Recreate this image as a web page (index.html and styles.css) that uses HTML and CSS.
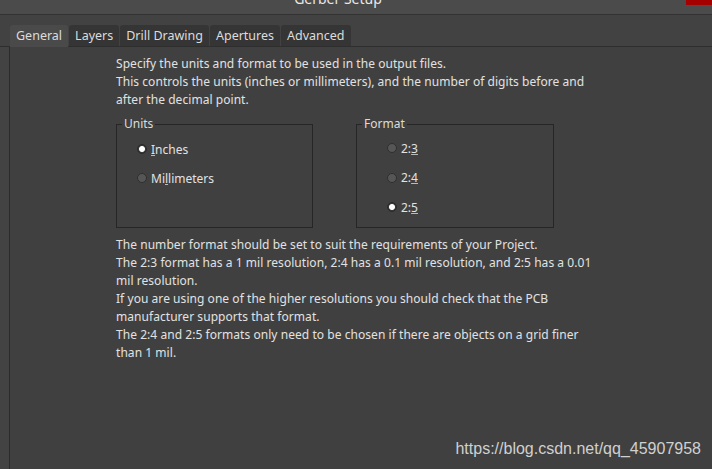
FILE: index.html
```html
<!DOCTYPE html>
<html lang="en">
<head>
  <meta charset="UTF-8" />
  <title>Gerber Setup</title>
  <link rel="stylesheet" href="styles.css">
</head>
<body>

  <div class="titlebar">
    <div class="title">Gerber Setup</div>
    <div class="close"></div>
  </div>

  <div class="tabbar">
    <div class="tab active">General</div>
    <div class="tab">Layers</div>
    <div class="tab">Drill Drawing</div>
    <div class="tab">Apertures</div>
    <div class="tab">Advanced</div>
  </div>

  <div class="main">
    <div class="gutter"></div>
    <div class="panel">
      <p class="text">Specify the units and format to be used in the output files.<br>
        This controls the units (inches or millimeters), and the number of digits before and<br>
        after the decimal point.</p>

      <div class="groups">
        <div class="group units">
          <span class="legend">Units</span>
          <label class="radio"><span class="dot on"></span><span><u>I</u>nches</span></label>
          <label class="radio"><span class="dot"></span><span>Mi<u>l</u>limeters</span></label>
        </div>
        <div class="group format">
          <span class="legend">Format</span>
          <label class="radio"><span class="dot"></span><span>2:<u>3</u></span></label>
          <label class="radio"><span class="dot"></span><span>2:<u>4</u></span></label>
          <label class="radio"><span class="dot on"></span><span>2:<u>5</u></span></label>
        </div>
      </div>

      <p class="text">The number format should be set to suit the requirements of your Project.<br>
        The 2:3 format has a 1 mil resolution, 2:4 has a 0.1 mil resolution, and 2:5 has a 0.01<br>
        mil resolution.<br>
        If you are using one of the higher resolutions you should check that the PCB<br>
        manufacturer supports that format.<br>
        The 2:4 and 2:5 formats only need to be chosen if there are objects on a grid finer<br>
        than 1 mil.</p>

      <div class="watermark">https://blog.csdn.net/qq_45907958</div>
    </div>
  </div>

</body>
</html>
```

FILE: styles.css
```css
html, body { margin: 0; padding: 0; height: 100%; overflow: hidden; }
body { background: #404040; color: #e2e2e2; font-family: "Noto Sans", "Open Sans", sans-serif; font-size: 12px; display: flex; flex-direction: column; }
.titlebar { height: 14px; background: #4b4b4b; position: relative; overflow: hidden; border-bottom: 1px solid #333; }
.title { text-align: center; font-size: 14px; line-height: 14px; margin-top: -8px; color: #e8e8e8; padding-right: 36px; }
.close { position: absolute; top: 0; right: 0; width: 26px; height: 5px; background: #a50000; }
.tabbar { background: #424242; display: flex; align-items: flex-end; padding-left: 10px; border-bottom: 1px solid #2e2e2e; box-sizing: border-box; height: 32px; }
.tab { height: 21px; line-height: 21px; padding: 0 6px; margin-right: 1px; background: #353535; border-radius: 3px 3px 0 0; color: #dcdcdc; font-size: 12.5px; }
.tab.active { background: #4a4a4a; height: 22px; margin-bottom: -1px; }
.main { flex: 1; display: flex; }
.gutter { width: 9px; background: #434343; }
.panel { flex: 1; border-left: 1px solid #2b2b2b; padding-left: 106px; position: relative; }
.text { margin: 8px 0 0; line-height: 18px; letter-spacing: 0.05px; }
.groups { display: flex; margin-top: 15px; margin-bottom: 8px; }
.groups + .text { margin-top: 8px; }
.group { position: relative; border: 1px solid #262626; height: 102px; box-sizing: content-box; }
.legend { position: absolute; top: -10px; left: 5px; padding: 0 2px; background: #404040; color: #dcdcdc; line-height: 18px; }
.units { width: 195px; margin-right: 43px; padding-top: 15px; height: 87px; }
.format { width: 196px; padding-top: 14px; height: 88px; }
.radio { display: flex; align-items: center; height: 18px; margin-bottom: 11px; }
.format .radio { margin-bottom: 11.5px; }
.units .radio { padding-left: 20px; }
.format .radio { padding-left: 30px; }
.dot { width: 10px; height: 10px; border-radius: 50%; background: #565656; border: 1px solid #2f2f2f; margin-right: 4px; box-sizing: border-box; }
.dot.on { background: radial-gradient(circle, #fff 0 2.5px, #3a3a3a 3.5px); border-color: #2a2a2a; }
u { text-decoration-color: #bbb; }
.watermark { position: absolute; right: 11px; bottom: 11px; font-family: "Liberation Sans", Arial, sans-serif; font-size: 16px; color: #d0d0d0; }
```
